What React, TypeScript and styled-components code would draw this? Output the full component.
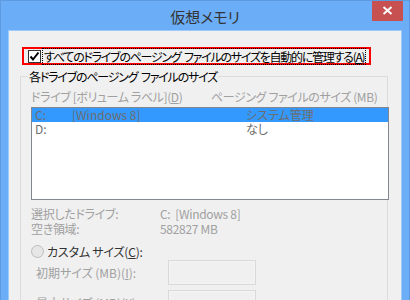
import React from "react";
import styled, { createGlobalStyle } from "styled-components";

const Global = createGlobalStyle`
  html, body { margin: 0; padding: 0; background: #6badf6; }
  body { font-family: "Noto Sans CJK JP", "Noto Sans", sans-serif; }
`;

const Window = styled.div`
  width: 410px;
  height: 300px;
  box-sizing: border-box;
  background: #6badf6;
  border: 1px solid #5d9ae0;
  border-bottom: none;
  display: flex;
  flex-direction: column;
  overflow: hidden;
`;

const TitleBar = styled.div`
  height: 29px;
  flex: none;
  display: grid;
  grid-template-columns: 1fr auto 1fr;
  align-items: start;
`;

const Title = styled.div`
  grid-column: 2;
  font-size: 15px;
  line-height: 15px;
  padding-top: 8px;
  color: #333;
  font-feature-settings: "palt";
`;

const CloseButton = styled.div`
  grid-column: 3;
  justify-self: end;
  margin-right: 6px;
  margin-top: -1px;
  width: 31px;
  height: 21px;
  background: #c75050;
  display: flex;
  align-items: center;
  justify-content: center;
`;

const Client = styled.div`
  flex: 1;
  margin: 0 7px;
  background: #f0f0f0;
  border-top: 1px solid #9ccafa;
  border-left: 1px solid #9ccafa;
  border-right: 1px solid #9ccafa;
  padding: 16px 0 0 13px;
  font-size: 12px;
  line-height: 15px;
  font-feature-settings: "palt";
  color: #000;
`;

const AutoRow = styled.div`
  width: 349px;
  height: 18px;
  box-sizing: border-box;
  border: 2px solid #f00;
  display: flex;
  align-items: center;
  padding-left: 4px;
  gap: 2px;
`;

const CheckBox = styled.div`
  width: 13px;
  height: 13px;
  box-sizing: border-box;
  border: 1px solid #333;
  background: #fff;
  display: flex;
  align-items: center;
  justify-content: center;
`;

const FocusLabel = styled.span`
  outline: 1px dotted #000;
  outline-offset: 0;
  padding: 0 1px;
  letter-spacing: -1.25px;
  word-spacing: 2px;
  white-space: nowrap;
`;

const Group = styled.fieldset`
  margin: 4px 0 0 -2px;
  width: 368px;
  box-sizing: border-box;
  border: 1px solid #dcdcdc;
  border-bottom: none;
  padding: 0 0 0 10px;
  min-width: 0;
`;

const Legend = styled.legend`
  padding: 0 1px;
  margin-left: -3px;
  font-size: 12px;
  line-height: 15px;
  letter-spacing: -1.2px;
  word-spacing: 2px;
`;

const HeaderRow = styled.div`
  display: grid;
  grid-template-columns: 180px 1fr;
  color: #a0a0a0;
  margin-top: 5px;
  height: 15px;
  letter-spacing: -0.4px;
  white-space: nowrap;
`;

const ListBox = styled.div`
  margin-top: 3px;
  width: 358px;
  height: 93px;
  box-sizing: border-box;
  border: 1px solid #828790;
  background: #fff;
`;

const ListRow = styled.div<{ $selected?: boolean }>`
  display: grid;
  grid-template-columns: 37px 174px 1fr;
  height: 14px;
  line-height: 14px;
  padding-left: 3px;
  color: #6d6d6d;
  background: ${(p) => (p.$selected ? "#3399ff" : "transparent")};
`;

const InfoGrid = styled.div`
  display: grid;
  grid-template-columns: 129px 1fr;
  color: #a0a0a0;
  margin-top: 6px;
  letter-spacing: -0.3px;
  white-space: pre;
`;

const RadioRow = styled.div`
  display: flex;
  align-items: center;
  gap: 3px;
  margin-top: 8px;
  height: 15px;
`;

const Radio = styled.div`
  width: 13px;
  height: 13px;
  box-sizing: border-box;
  border-radius: 50%;
  border: 1px solid #bcbcbc;
  background: #e6e6e6;
`;

const RadioLabel = styled.span`
  color: #333;
  letter-spacing: -0.2px;
`;

const Fields = styled.div`
  display: flex;
  flex-direction: column;
  gap: 5px;
  margin-top: 1px;
`;

const FieldRow = styled.div`
  display: grid;
  grid-template-columns: 132px 88px;
  align-items: center;
  padding-left: 5px;
  color: #a0a0a0;
`;

const TextBox = styled.div`
  width: 88px;
  height: 25px;
  box-sizing: border-box;
  border: 1px solid #d9d9d9;
  background: #f0f0f0;
  box-shadow: inset 0 0 0 1px #f4f4f4;
`;

export default function App() {
  return (
    <>
      <Global />
      <Window>
        <TitleBar>
          <Title>仮想メモリ</Title>
          <CloseButton>
            <svg width="11" height="9" viewBox="0 0 11 9">
              <path d="M1.5 1 L9.5 8 M9.5 1 L1.5 8" stroke="#fff" strokeWidth="2" />
            </svg>
          </CloseButton>
        </TitleBar>
        <Client>
          <AutoRow>
            <CheckBox>
              <svg width="11" height="11" viewBox="0 0 11 11">
                <path d="M1.5 5.5 L4 8.5 L9.5 1.5" stroke="#000" strokeWidth="2" fill="none" />
              </svg>
            </CheckBox>
            <FocusLabel>
              すべてのドライブのページング ファイルのサイズを自動的に管理する(<u>A</u>)
            </FocusLabel>
          </AutoRow>
          <Group>
            <Legend>各ドライブのページング ファイルのサイズ</Legend>
            <HeaderRow>
              <span>
                ドライブ [ボリューム ラベル](<u>D</u>)
              </span>
              <span>ページング ファイルのサイズ (MB)</span>
            </HeaderRow>
            <ListBox>
              <ListRow $selected>
                <span>C:</span>
                <span>[Windows 8]</span>
                <span>システム管理</span>
              </ListRow>
              <ListRow>
                <span>D:</span>
                <span></span>
                <span>なし</span>
              </ListRow>
            </ListBox>
            <InfoGrid>
              <span>選択したドライブ:</span>
              <span>{"C:  [Windows 8]"}</span>
              <span>空き領域:</span>
              <span>582827 MB</span>
            </InfoGrid>
            <RadioRow>
              <Radio />
              <RadioLabel>
                カスタム サイズ(<u>C</u>):
              </RadioLabel>
            </RadioRow>
            <Fields>
              <FieldRow>
                <span>
                  初期サイズ (MB)(<u>I</u>):
                </span>
                <TextBox />
              </FieldRow>
              <FieldRow>
                <span>
                  最大サイズ (MB)(<u>X</u>):
                </span>
                <TextBox />
              </FieldRow>
            </Fields>
          </Group>
        </Client>
      </Window>
    </>
  );
}
